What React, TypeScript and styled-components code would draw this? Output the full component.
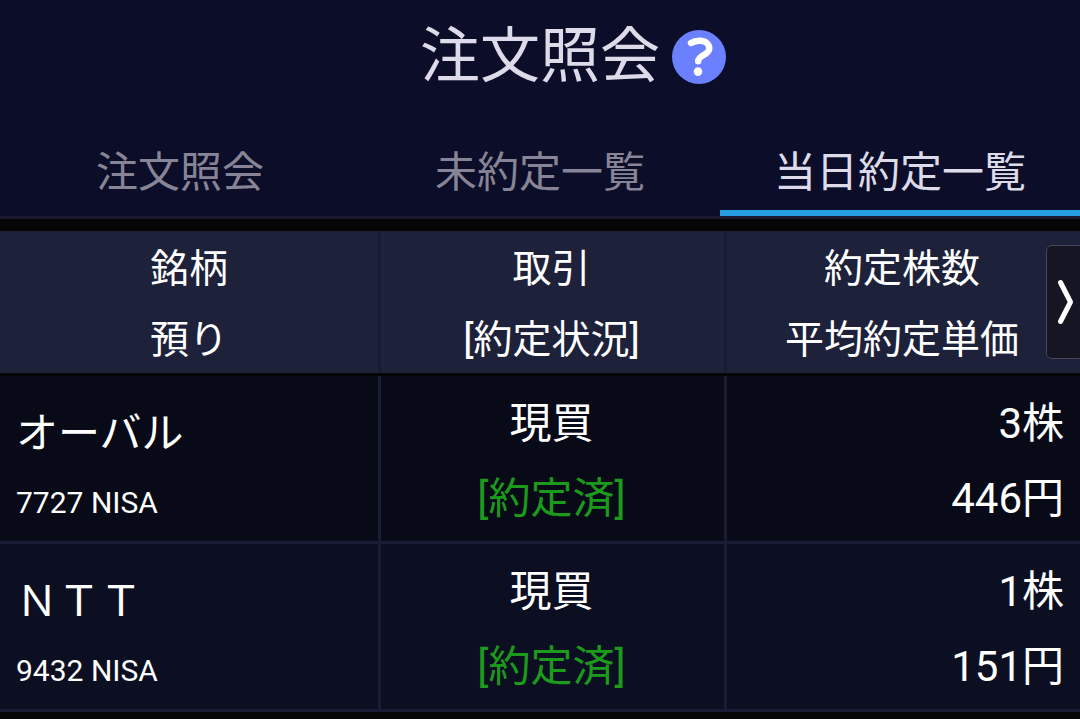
import styled, { createGlobalStyle } from "styled-components";

const GlobalStyle = createGlobalStyle`
  * {
    box-sizing: border-box;
  }
  body {
    margin: 0;
    overflow: hidden;
    background-color: #060607;
    color: #fff;
    font-family: Roboto, "Noto Sans CJK JP", sans-serif;
  }
`;

const Wrapper = styled.div`
  width: 1080px;
  height: 719px;
  overflow: hidden;
  background-color: #060607;
`;

const Header = styled.header`
  display: flex;
  align-items: center;
  height: 116px;
  padding: 0 0 2px 420px;
  gap: 12px;
  background-color: #0c0d28;
`;

const Title = styled.h1`
  margin: 0;
  font-size: 60px;
  font-weight: 400;
  line-height: 116px;
  color: #dddbe9;
`;

const Help = styled.span`
  display: flex;
  width: 54px;
  height: 54px;
  border-radius: 50%;
  background-color: #6a80ff;
`;

const Tabs = styled.nav`
  display: grid;
  grid-template-columns: repeat(3, 1fr);
  height: 103px;
  background-color: #0c0d28;
  border-bottom: 3px solid #1a1733;
`;

const Tab = styled.div<{ $active?: boolean }>`
  height: 100px;
  text-align: center;
  font-size: 42px;
  line-height: 114px;
  color: ${(props) => (props.$active ? "#dddbe9" : "#868496")};
  border-bottom: 6px solid
    ${(props) => (props.$active ? "#269de0" : "transparent")};
`;

const Row = styled.div`
  display: grid;
  grid-template-columns: 381px 346px 353px;
  height: 168px;
  background-color: #080a17;

  &:nth-child(odd) {
    background-color: #0c0e22;
  }
`;

const HeadRow = styled.div`
  display: grid;
  grid-template-columns: 381px 346px 353px;
  position: relative;
  height: 142px;
  margin: 12px 0 3px;
  background-color: #1e213a;
`;

const HeadCell = styled.div`
  height: 142px;
  padding-top: 3px;
  font-size: 39px;
  line-height: 71px;
  text-align: center;
  border-right: 3px solid #191b34;

  &:nth-child(2) {
    padding-right: 2px;
  }
  &:nth-child(3) {
    border-color: transparent;
  }
`;

const Cell = styled.div<{ $align?: string }>`
  padding: 10px 16px 0;
  font-size: 42px;
  line-height: 75px;
  text-align: ${(props) => props.$align || "left"};
  border-right: 3px solid #1a1b35;
  border-bottom: 3px solid #1a1b35;

  &:nth-child(2) {
    padding-right: 18px;
  }
  &:last-child {
    border-right: none;
  }
`;

const Name = styled.div`
  padding-top: 10px;
`;

const Code = styled.div`
  font-size: 30px;
  line-height: 64px;
`;

const Status = styled.div`
  color: #1b9a1b;
`;

const Next = styled.button`
  position: absolute;
  top: 14px;
  right: -4px;
  width: 38px;
  height: 114px;
  padding: 0;
  border: 1px solid #47465a;
  border-radius: 6px;
  background-color: #151524;
`;

const orders = [
  { name: "オーバル", code: "7727 NISA", count: "3株", price: "446円" },
  { name: "ＮＴＴ", code: "9432 NISA", count: "1株", price: "151円" },
];

function App() {
  return (
    <Wrapper>
      <GlobalStyle />
      <Header>
        <Title>注文照会</Title>
        <Help>
          <svg width="54" height="54" viewBox="0 0 54 54" fill="none">
            <path
              d="M19 13C21.5 11.4 24 10.8 27.5 10.8C33.5 10.8 37.3 14 37.3 18.5C37.3 25.2 26.2 24.8 26.2 31.2"
              stroke="#fff"
              strokeWidth="6.4"
              strokeLinecap="round"
              strokeLinejoin="round"
            />
            <circle cx="26" cy="41.6" r="4.3" fill="#fff" />
          </svg>
        </Help>
      </Header>
      <Tabs>
        <Tab>注文照会</Tab>
        <Tab>未約定一覧</Tab>
        <Tab $active>当日約定一覧</Tab>
      </Tabs>
      <HeadRow>
        <HeadCell>
          <div>銘柄</div>
          <div>預り</div>
        </HeadCell>
        <HeadCell>
          <div>取引</div>
          <div>[約定状況]</div>
        </HeadCell>
        <HeadCell>
          <div>約定株数</div>
          <div>平均約定単価</div>
        </HeadCell>
        <Next>
          <svg
            width="36"
            height="112"
            viewBox="0 0 36 112"
            fill="none"
            display="block"
          >
            <path
              d="M13.5 36.5L23.5 56L13.5 75.5"
              stroke="#fff"
              strokeWidth="5"
              strokeLinecap="round"
              strokeLinejoin="round"
            />
          </svg>
        </Next>
      </HeadRow>
      {orders.map((order) => (
        <Row key={order.code}>
          <Cell>
            <Name>{order.name}</Name>
            <Code>{order.code}</Code>
          </Cell>
          <Cell $align="center">
            <div>現買</div>
            <Status>[約定済]</Status>
          </Cell>
          <Cell $align="right">
            <div>{order.count}</div>
            <div>{order.price}</div>
          </Cell>
        </Row>
      ))}
    </Wrapper>
  );
}

export default App;
